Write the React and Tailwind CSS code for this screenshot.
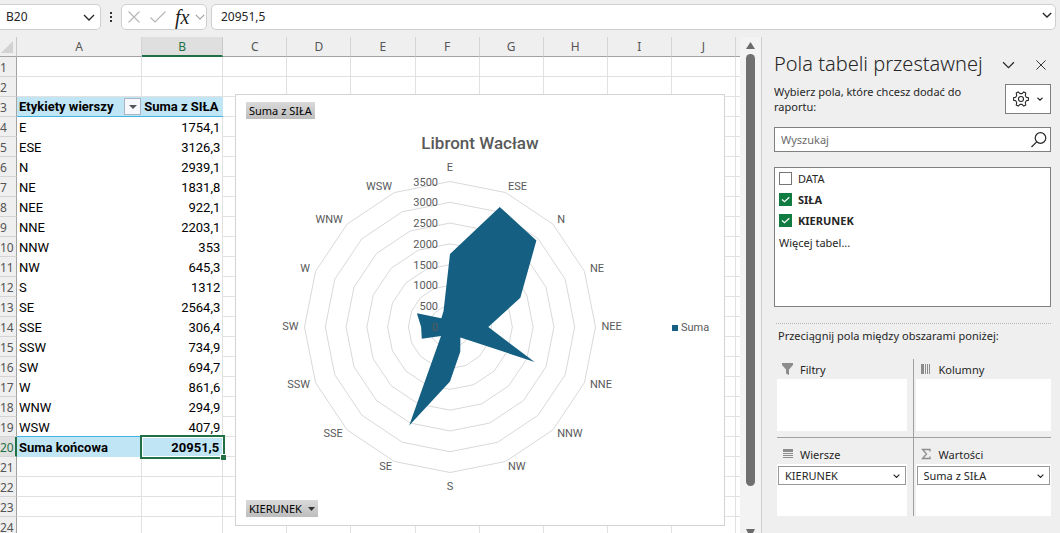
import { useState } from 'react';

// The last column is only partly in view and carries no letter
const COLUMNS = ['A', 'B', 'C', 'D', 'E', 'F', 'G', 'H', 'I', 'J', ''];
const ROWS = Array.from({ length: 24 }, (_, i) => i + 1);

// Pivot data, in the order of the rows in the sheet
const DATA = [
  ['E', 1754.1],
  ['ESE', 3126.3],
  ['N', 2939.1],
  ['NE', 1831.8],
  ['NEE', 922.1],
  ['NNE', 2203.1],
  ['NNW', 353],
  ['NW', 645.3],
  ['S', 1312],
  ['SE', 2564.3],
  ['SSE', 306.4],
  ['SSW', 734.9],
  ['SW', 694.7],
  ['W', 861.6],
  ['WNW', 294.9],
  ['WSW', 407.9],
];

const formatNumber = (value) => String(value).replace('.', ',');

function Chevron({ className, strokeWidth = 1.3 }) {
  return (
    <svg className={className} viewBox="0 0 12 7" fill="none" stroke="currentColor" strokeWidth={strokeWidth}>
      <path d="M1 1l5 5 5-5" />
    </svg>
  );
}

function Cross({ className }) {
  return (
    <svg className={className} viewBox="0 0 12 12" fill="none" stroke="currentColor" strokeWidth="1.1">
      <path d="M0.5 0.5l11 11M11.5 0.5l-11 11" />
    </svg>
  );
}

function FormulaBar() {
  return (
    <div className="flex h-[37px] shrink-0 items-start pt-1 pr-1 font-['Noto_Sans','Open_Sans',sans-serif] text-xs text-[#262626]">
      <div className="flex h-[26px] w-[101px] items-center rounded-r-[5px] border border-l-0 border-[#cfcfcf] bg-white pr-[5px]">
        <input aria-label="Pole nazwy" defaultValue="B20" className="w-0 flex-1 pl-1.5 outline-none" />
        <button type="button" aria-label="Lista nazw">
          <Chevron className="h-[7px] w-3" />
        </button>
      </div>
      <svg className="mx-2 h-[26px] w-1 fill-[#333]" viewBox="0 0 4 26">
        <path d="M1 8h2v2H1zM1 12h2v2H1zM1 16h2v2H1z" />
      </svg>
      <div className="flex h-[26px] w-[86px] items-center justify-between rounded-[5px] border border-[#cfcfcf] bg-white pr-px pl-1.5">
        <button type="button" aria-label="Anuluj" className="text-[#b5b5b5]">
          <Cross className="size-3" />
        </button>
        <button type="button" aria-label="Wpis" className="text-[#b5b5b5]">
          <svg className="h-3 w-4" viewBox="0 0 16 12" fill="none" stroke="currentColor" strokeWidth="1.2">
            <path d="M0.5 6.5l4.5 4.5L15.5 0.5" />
          </svg>
        </button>
        <button type="button" className="font-['Liberation_Serif',serif] text-xl leading-5 text-[#222] italic">
          fx
        </button>
        <Chevron className="-ml-1 h-1.5 w-2.5 text-[#999]" />
      </div>
      <div className="ml-1 flex h-[26px] flex-1 items-center rounded-[5px] border border-[#cfcfcf] bg-white pr-[3px] pl-[9px]">
        <input aria-label="Pasek formuły" defaultValue="20951,5" className="w-0 flex-1 outline-none" />
        <button type="button" aria-label="Rozwiń pasek formuły">
          <Chevron className="mb-1 h-1.5 w-2.5" strokeWidth={1.6} />
        </button>
      </div>
    </div>
  );
}

function PivotCell({ row, col }) {
  const plain = 'h-5 border-r border-b border-[#e1e1e1] p-0';
  if (col > 1 || row < 3 || row > 20) return <td className={plain} />;

  if (row === 3) {
    return (
      <td className="h-5 border-b border-[#44b3e1] bg-[#c0e6f5] p-0 font-bold">
        {col === 0 ? (
          <div className="flex h-[19px] items-center justify-between pl-0.5 whitespace-nowrap">
            Etykiety wierszy
            <button
              type="button"
              aria-label="Filtruj etykiety wierszy"
              className="mr-px flex h-[17px] w-[17px] items-center justify-center border border-[#a9b4c4] bg-[#f6f8fb]"
            >
              <svg className="h-1 w-2 fill-[#555]" viewBox="0 0 8 4">
                <path d="M0 0h8L4 4z" />
              </svg>
            </button>
          </div>
        ) : (
          <div className="pl-0.5 whitespace-nowrap">Suma z SIŁA</div>
        )}
      </td>
    );
  }

  if (row === 20) {
    return col === 0 ? (
      <td className="h-5 bg-[#c0e6f5] p-0 pt-px pl-0.5 font-bold">Suma końcowa</td>
    ) : (
      <td className="relative h-5 bg-[#c0e6f5] p-0 pt-px pr-1 text-right font-bold">
        20951,5
        <span className="absolute -inset-0.5 border-2 border-[#1f7145] outline -outline-offset-3 outline-white" />
        <span className="absolute -right-[3px] -bottom-[3px] size-1.5 border-t border-l border-white bg-[#1f7145]" />
      </td>
    );
  }

  const [label, value] = DATA[row - 4];
  const bottom = row === 19 ? 'border-b border-b-[#44b3e1]' : '';
  return col === 0 ? (
    <td className={`h-5 p-0 pt-px pl-0.5 ${bottom}`}>{label}</td>
  ) : (
    <td className={`h-5 border-r border-r-[#e1e1e1] p-0 pt-px pr-0.5 text-right ${bottom}`}>{formatNumber(value)}</td>
  );
}

function Grid() {
  return (
    <table className="w-[800px] table-fixed border-separate border-spacing-0 bg-white font-['Roboto',sans-serif] text-[13px] leading-[17px] text-black">
      <colgroup>
        <col className="w-[17px]" />
        <col className="w-[125px]" />
        <col className="w-[81px]" />
        {COLUMNS.slice(2).map((name) => (
          <col key={name} className="w-16" />
        ))}
      </colgroup>
      <thead className="bg-[#efefef] font-['Noto_Sans','Open_Sans',sans-serif] text-xs leading-[17px] text-[#555]">
        <tr>
          <th className="h-5 border-r border-b border-r-[#c8c8c8] border-b-[#a3a3a3] p-0" aria-label="Zaznacz wszystko">
            <svg className="h-3 w-[13px] fill-[#d2d2d2]" viewBox="0 0 13 12">
              <path d="M13 0v12H1z" />
            </svg>
          </th>
          {COLUMNS.map((name) => (
            <th
              key={name}
              className={
                name === 'B'
                  ? 'h-5 border-r border-b-2 border-r-[#c8c8c8] border-b-[#1f7145] bg-[#dfdfdf] p-0 font-normal text-[#1f7145]'
                  : 'h-5 border-r border-b border-r-[#d4d4d4] border-b-[#a3a3a3] p-0 font-normal'
              }
            >
              {name}
            </th>
          ))}
        </tr>
      </thead>
      <tbody>
        {ROWS.map((row) => (
          <tr key={row}>
            <th
              scope="row"
              className={
                row === 20
                  ? "h-5 border-r-2 border-b border-r-[#1f7145] border-b-[#d4d4d4] bg-[#dfdfdf] p-0 pt-px text-left font-['Noto_Sans',sans-serif] text-xs leading-[17px] font-normal text-[#1f7145]"
                  : "h-5 border-r border-b border-r-[#a3a3a3] border-b-[#d4d4d4] bg-[#efefef] p-0 pt-px text-left font-['Noto_Sans',sans-serif] text-xs leading-[17px] font-normal text-[#555]"
              }
            >
              {row}
            </th>
            {COLUMNS.map((name, col) => (
              <PivotCell key={name} row={row} col={col} />
            ))}
          </tr>
        ))}
      </tbody>
    </table>
  );
}

const CX = 204;
const CY = 171;
const RADIUS = 145.5;
const MAX = 3500;
const TICKS = [0, 500, 1000, 1500, 2000, 2500, 3000, 3500];

// Point on the radar for the category at the given index
const polar = (index, r) => {
  const angle = (index * 2 * Math.PI) / DATA.length;
  return [CX + r * Math.sin(angle), CY - r * Math.cos(angle)];
};

const ring = (radiusOf) => DATA.map((_, i) => polar(i, radiusOf(i)).join(',')).join(' ');

function RadarPlot() {
  return (
    <svg
      className="h-[344px] w-[408px] shrink-0 font-['Roboto',sans-serif] text-[11px]"
      viewBox="0 0 408 344"
      role="img"
      aria-label="Wykres radarowy"
    >
      {TICKS.slice(1).map((tick) => (
        <polygon key={tick} points={ring(() => (tick / MAX) * RADIUS)} fill="none" stroke="#d9d9d9" />
      ))}
      <polygon points={ring((i) => (DATA[i][1] / MAX) * RADIUS)} fill="#156082" />
      {TICKS.map((tick) => (
        <text key={tick} x={CX - 12} y={CY - (tick / MAX) * RADIUS + 4} textAnchor="end" fill="#595959">
          {tick}
        </text>
      ))}
      {DATA.map(([label], i) => {
        const vertical = i % 8 === 0;
        const [x, y] = polar(i, RADIUS + (vertical ? 14 : 6));
        const anchor = vertical ? 'middle' : i < 8 ? 'start' : 'end';
        return (
          <text key={label} x={x} y={y + 3} textAnchor={anchor} fill="#595959">
            {label}
          </text>
        );
      })}
    </svg>
  );
}

function ChartCard() {
  const fieldButton =
    "flex h-[17px] items-center gap-1.5 self-start bg-linear-to-b from-[#dadada] to-[#bdbdbd] px-[3px] font-['Noto_Sans',sans-serif] text-[11px] leading-4 text-black";
  return (
    <div className="absolute top-[57px] left-[235px] flex w-[490px] flex-col border border-[#d4d4d4] bg-white px-2.5 pt-[7px] pb-2">
      <button type="button" className={fieldButton}>
        Suma z SIŁA
      </button>
      <h2 className="mt-3.5 mb-[3px] text-center font-['Roboto',sans-serif] text-[17px] leading-5 font-medium text-[#595959]">
        Libront Wacław
      </h2>
      <div className="flex items-center">
        <RadarPlot />
        <div className="ml-[18px] flex items-center gap-[3px] font-['Roboto',sans-serif] text-[11px] text-[#595959]">
          <span className="size-1.5 bg-[#156082]" />
          Suma
        </div>
      </div>
      <button type="button" className={fieldButton}>
        KIERUNEK
        <svg className="h-1 w-[7px] fill-[#333]" viewBox="0 0 7 4">
          <path d="M0 0h7L3.5 4z" />
        </svg>
      </button>
    </div>
  );
}

function ScrollBar() {
  return (
    <div className="flex w-[21px] shrink-0 flex-col items-center bg-[#f3f3f3] pt-[5px]">
      <svg className="h-[7px] w-[9px] shrink-0 fill-[#6b6b6b]" viewBox="0 0 9 7">
        <path d="M4.5 0L9 7H0z" />
      </svg>
      <div className="mt-[5px] flex w-full flex-1 justify-center">
        <div className="h-[91%] w-[9px] rounded-full bg-[#707070]" />
      </div>
      <svg className="h-1 w-[9px] shrink-0 fill-[#6b6b6b]" viewBox="0 0 9 4">
        <path d="M0 0h9L7 4H2z" />
      </svg>
    </div>
  );
}

function FieldRow({ name, checked, onChange }) {
  return (
    <label className="flex h-[21px] items-center gap-1.5">
      <span className="relative flex size-[13px]">
        <input
          type="checkbox"
          checked={checked}
          onChange={onChange}
          className="size-[13px] appearance-none border border-[#767676] bg-white checked:border-[#107c41] checked:bg-[#107c41]"
        />
        {checked && (
          <svg
            className="pointer-events-none absolute inset-0 size-[13px]"
            viewBox="0 0 13 13"
            fill="none"
            stroke="#fff"
            strokeWidth="1.2"
          >
            <path d="M3 6.5l2.5 2.3L10.3 4.2" />
          </svg>
        )}
      </span>
      <span className={checked ? 'font-bold' : ''}>{name}</span>
    </label>
  );
}

function Area({ title, icon, value, className }) {
  return (
    <section className={className}>
      <h3 className="flex h-5 items-center gap-1.5 pl-1">
        {icon}
        {title}
      </h3>
      <div className="h-[52px] bg-white p-px pt-0.5">
        {value && (
          <div className="relative">
            <select
              aria-label={title}
              className="block h-[19px] w-full appearance-none border border-[#999] bg-white pl-1.5 leading-4"
            >
              <option>{value}</option>
            </select>
            <Chevron className="pointer-events-none absolute top-2 right-1.5 h-1 w-[7px]" strokeWidth={2} />
          </div>
        )}
      </div>
    </section>
  );
}

const filterIcon = (
  <svg className="h-3 w-[13px] fill-[#8c8c8c]" viewBox="0 0 13 12">
    <path d="M1 0h11v2L8 6.5V12L5 10.5v-4L1 2z" />
  </svg>
);

const columnsIcon = (
  <svg className="h-3 w-[13px] fill-[#8c8c8c]" viewBox="0 0 13 12">
    <path d="M1 1h3v10H1zM5 1h1v10H5zM7 1h1v10H7zM9 1h1v10H9z" />
  </svg>
);

const rowsIcon = (
  <svg className="h-3 w-[13px] fill-[#8c8c8c]" viewBox="0 0 13 12">
    <path d="M2 1h10v3H2zM2 5h10v1H2zM2 7h10v1H2zM2 9h10v1H2z" />
  </svg>
);

const sigmaIcon = (
  <svg className="h-3 w-[13px]" viewBox="0 0 13 12" fill="none" stroke="#8c8c8c" strokeWidth="1.3">
    <path d="M10 3.5V1.5H2.5L6.5 6l-4 4.5H10v-2" />
  </svg>
);

function FieldsPane() {
  const [fields, setFields] = useState([
    { name: 'DATA', checked: false },
    { name: 'SIŁA', checked: true },
    { name: 'KIERUNEK', checked: true },
  ]);

  const toggle = (name) => {
    setFields(fields.map((f) => (f.name === name ? { ...f, checked: !f.checked } : f)));
  };

  return (
    <aside className="flex w-[299px] shrink-0 flex-col border-l border-[#cfcfcf] pr-[9px] pl-3 font-['Noto_Sans','Open_Sans',sans-serif] text-[11px] leading-[15px] text-[#262626]">
      <div className="flex h-[47px] items-end pb-1">
        <h1 className="flex-1 text-xl leading-8 font-light whitespace-nowrap">Pola tabeli przestawnej</h1>
        <button type="button" aria-label="Opcje okienka" className="mr-[21px] mb-[11px]">
          <Chevron className="h-2 w-[13px]" strokeWidth={1.1} />
        </button>
        <button type="button" aria-label="Zamknij" className="mr-[5px] mb-2.5">
          <Cross className="size-2.5" />
        </button>
      </div>
      <div className="flex justify-between">
        <p className="w-[210px]">Wybierz pola, które chcesz dodać do raportu:</p>
        <button
          type="button"
          aria-label="Narzędzia"
          className="flex h-[30px] w-[46px] items-center justify-center gap-2 border border-[#808080] bg-white"
        >
          <svg className="size-4" viewBox="0 0 16 16" fill="none" stroke="currentColor" strokeWidth="1.1">
            <path
              strokeLinejoin="round"
              d="M5.2 0.9L7 2.6h2L10.8 0.9 12.8 2l-.5 2.5 1 1.7 2.3.7v2.2l-2.3.7-1 1.7.5 2.5-2 1.1L9 13.4H7l-1.8 1.7-2-1.1.5-2.5-1-1.7L.4 9.1V6.9l2.3-.7 1-1.7L3.2 2z"
            />
            <circle cx="8" cy="8" r="2.5" />
          </svg>
          <Chevron className="h-1 w-1.5" strokeWidth={2.2} />
        </button>
      </div>
      <div className="mt-[13px] flex h-[25px] items-center border border-[#808080] bg-white pr-[3px]">
        <input
          type="search"
          aria-label="Wyszukaj"
          placeholder="Wyszukaj"
          className="w-0 flex-1 pl-1.5 outline-none placeholder:text-[#6b6b6b]"
        />
        <button type="button" aria-label="Szukaj">
          <svg className="size-4" viewBox="0 0 16 16" fill="none" stroke="currentColor" strokeWidth="1.2">
            <circle cx="9.5" cy="6" r="5.3" />
            <path d="M5.7 9.8L0.5 15" />
          </svg>
        </button>
      </div>
      <div className="mt-[15px] h-[140px] border border-[#808080] bg-white pl-1">
        {fields.map((field) => (
          <FieldRow key={field.name} {...field} onChange={() => toggle(field.name)} />
        ))}
        <a href="#tabele" className="mt-1 block">
          Więcej tabel...
        </a>
      </div>
      <div className="mt-4 ml-0.5 border-t border-dotted border-[#b5b5b5]" />
      <p className="mt-1 ml-1">Przeciągnij pola między obszarami poniżej:</p>
      <div className="mt-4 ml-[3px] grid grid-cols-[137fr_138fr]">
        <Area title="Filtry" icon={filterIcon} className="border-r border-b border-[#a0a0a0] pr-1.5 pb-1.5" />
        <Area title="Kolumny" icon={columnsIcon} className="border-b border-[#a0a0a0] pb-1.5 pl-0.5" />
        <Area
          title="Wiersze"
          icon={rowsIcon}
          value="KIERUNEK"
          className="border-r border-[#a0a0a0] pt-1.5 pr-1.5"
        />
        <Area title="Wartości" icon={sigmaIcon} value="Suma z SIŁA" className="pt-1.5 pl-0.5" />
      </div>
    </aside>
  );
}

export default function App() {
  return (
    <div className="flex h-screen flex-col overflow-hidden bg-[#efefef]">
      <FormulaBar />
      <div className="flex min-h-0 flex-1">
        <main className="relative min-w-0 flex-1 overflow-hidden">
          <Grid />
          <ChartCard />
        </main>
        <ScrollBar />
        <FieldsPane />
      </div>
    </div>
  );
}
